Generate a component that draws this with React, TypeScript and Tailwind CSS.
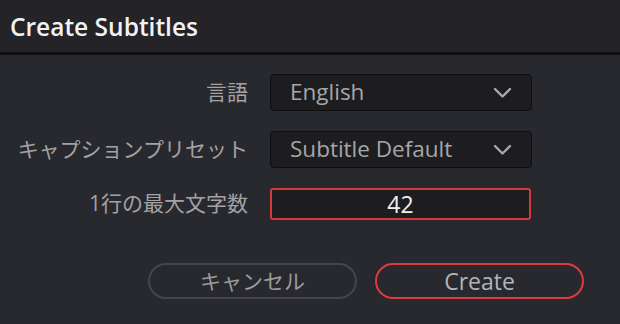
import React from "react";

const font = { fontFamily: '"Open Sans", "Noto Sans CJK JP", sans-serif' };

function Chevron() {
  return (
    <svg width="19" height="12" viewBox="0 0 19 12" fill="none">
      <path d="M2 2 L9.5 9.5 L17 2" stroke="#a9a9ab" strokeWidth="2.4" strokeLinecap="round" strokeLinejoin="round" />
    </svg>
  );
}

function Select({ value }: { value: string }) {
  return (
    <div className="flex h-[37px] w-[262px] items-center justify-between rounded-[4px] border border-[#0e0e10] bg-[#1d1d20] pl-[19px] pr-[19px]">
      <span className="text-[22.5px] leading-none text-[#a6a6a8]">{value}</span>
      <Chevron />
    </div>
  );
}

export default function App() {
  return (
    <div className="flex h-[324px] w-[620px] flex-col bg-[#28292e]" style={font}>
      <div className="flex h-[52px] shrink-0 items-center bg-[#232328] pl-[10px] pt-[2px]">
        <span className="text-[24.5px] font-semibold leading-none text-[#f2f2f2]">Create Subtitles</span>
      </div>
      <div className="h-[3px] shrink-0 bg-[#0f0f13]" />
      <div className="flex flex-col gap-[20px] pt-[19px]">
        <div className="flex items-center">
          <div className="w-[250px] pr-[2px] text-right text-[21px] text-[#a3a3a5]">言語</div>
          <div className="ml-[20px]"><Select value="English" /></div>
        </div>
        <div className="flex items-center">
          <div className="w-[250px] pr-[2px] text-right text-[21px] text-[#a3a3a5]">キャプションプリセット</div>
          <div className="ml-[20px]"><Select value="Subtitle Default" /></div>
        </div>
        <div className="flex items-center">
          <div className="w-[250px] pr-[2px] text-right text-[21px] text-[#a3a3a5]">1行の最大文字数</div>
          <div className="ml-[20px] flex h-[32px] w-[261px] items-center justify-center rounded-[3px] border-2 border-[#d9383b] bg-[#1d1d20]">
            <span className="text-[23px] leading-none text-[#f0f0f0]">42</span>
          </div>
        </div>
      </div>
      <div className="mt-[43px] flex gap-[18px] pl-[148px]">
        <div className="flex h-[36px] w-[209px] items-center justify-center rounded-full border-2 border-[#44454c]">
          <span className="text-[21px] leading-none text-[#9c9c9f]">キャンセル</span>
        </div>
        <div className="flex h-[36px] w-[209px] items-center justify-center rounded-full border-2 border-[#e0393d]">
          <span className="text-[23px] leading-none text-[#b4b4b6]">Create</span>
        </div>
      </div>
    </div>
  );
}
